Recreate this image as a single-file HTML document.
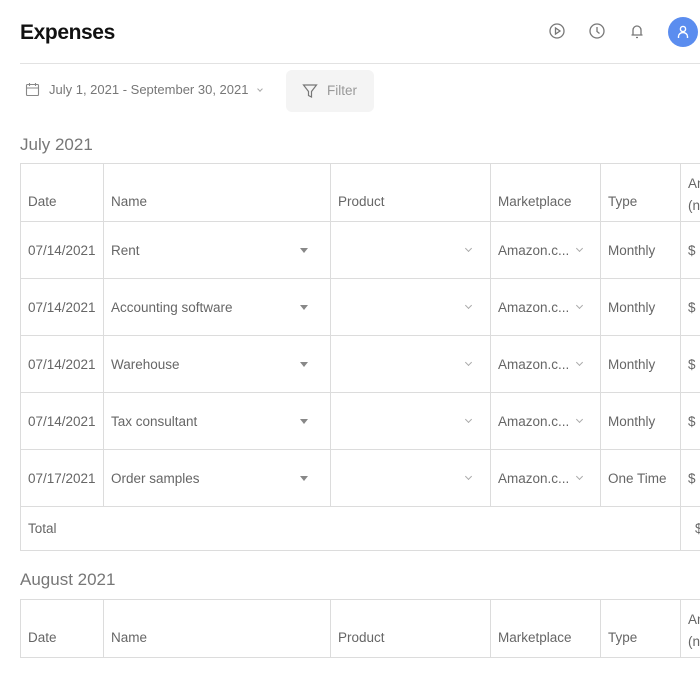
<!DOCTYPE html>
<html><head><style>
html,body{margin:0;padding:0;width:700px;height:700px;overflow:hidden;background:#fff;font-family:"Liberation Sans",sans-serif;color:#666;}
.abs{position:absolute}
h1{position:absolute;left:20px;top:21px;margin:0;font-size:21px;font-weight:bold;color:#111;letter-spacing:-0.4px}
.hr{position:absolute;left:20px;top:63px;width:680px;height:1px;background:#e2e2e2}
table{position:absolute;left:20px;border-collapse:collapse;table-layout:fixed;width:760px;font-size:13.5px;color:#666}
td{border:1px solid #dcdcdc;padding:0 0 0 7px;white-space:nowrap;overflow:hidden;position:relative}
.tri{position:absolute;top:50%;margin-top:-2px;width:0;height:0;border-left:4px solid transparent;border-right:4px solid transparent;border-top:5px solid #888}
.chev{position:absolute;top:50%;margin-top:-4px;width:4px;height:4px;border-right:1px solid #aaa;border-bottom:1px solid #aaa;transform:rotate(45deg)}
.sec{position:absolute;left:20px;font-size:17px;color:#777}
</style></head><body>
<h1>Expenses</h1>
<svg class="abs" style="left:548px;top:22px" width="18" height="18" viewBox="0 0 18 18" fill="none" stroke="#777" stroke-width="1.3"><circle cx="9" cy="9" r="7"/><path d="M7.5 6v6l4.5-3z"/></svg>
<svg class="abs" style="left:588px;top:22px" width="18" height="18" viewBox="0 0 18 18" fill="none" stroke="#777" stroke-width="1.3"><circle cx="9" cy="9" r="7"/><path d="M9 5v4.5l2.5 2"/></svg>
<svg class="abs" style="left:628px;top:22px" width="18" height="18" viewBox="0 0 18 18" fill="none" stroke="#777" stroke-width="1.3"><path d="M5 13V8a4 4 0 0 1 8 0v5M3.5 13h11M8 15.5h2"/></svg>
<div class="abs" style="left:668px;top:17px;width:30px;height:30px;border-radius:50%;background:#5b8def"></div>
<svg class="abs" style="left:675px;top:24px" width="16" height="16" viewBox="0 0 16 16" fill="none" stroke="#fff" stroke-width="1.4"><circle cx="8" cy="5" r="2.6"/><path d="M3.5 14v-1.5a4.5 4 0 0 1 9 0V14"/></svg>
<div class="hr"></div>
<svg class="abs" style="left:25px;top:82px" width="15" height="15" viewBox="0 0 15 15" fill="none" stroke="#888" stroke-width="1.1"><rect x="1.5" y="2.5" width="12" height="11" rx="1"/><path d="M1.5 6h12M4.5 1v3M10.5 1v3"/></svg>
<div class="abs" style="left:49px;top:82px;font-size:13px;color:#777">July 1, 2021 - September 30, 2021</div>
<div class="abs" style="left:258px;top:87px;width:3px;height:3px;border-right:1px solid #aaa;border-bottom:1px solid #aaa;transform:rotate(45deg)"></div>
<div class="abs" style="left:286px;top:70px;width:88px;height:42px;border-radius:6px;background:#f4f4f4"></div>
<svg class="abs" style="left:302px;top:83px" width="16" height="16" viewBox="0 0 16 16" fill="none" stroke="#777" stroke-width="1.2"><path d="M1.5 2h13L9.5 8.5V14l-3-1.5V8.5z"/></svg>
<div class="abs" style="left:327px;top:83px;font-size:13.5px;color:#999">Filter</div>

<div class="sec" style="top:135px">July 2021</div>
<table style="top:163px">
<colgroup><col style="width:83px"><col style="width:227px"><col style="width:160px"><col style="width:110px"><col style="width:80px"><col style="width:100px"></colgroup>
<tr style="height:58px"><td style="padding-top:18px">Date</td><td style="padding-top:18px">Name</td><td style="padding-top:18px">Product</td><td style="padding-top:18px">Marketplace</td><td style="padding-top:18px">Type</td><td style="line-height:22px;padding-top:4px">Am<br>(n</td></tr>
<tr style="height:57px"><td>07/14/2021</td><td>Rent<span class="tri" style="left:196px"></span></td><td><span class="chev" style="left:135px"></span></td><td>Amazon.c...<span class="chev" style="left:86px"></span></td><td>Monthly</td><td>$</td></tr>
<tr style="height:57px"><td>07/14/2021</td><td>Accounting software<span class="tri" style="left:196px"></span></td><td><span class="chev" style="left:135px"></span></td><td>Amazon.c...<span class="chev" style="left:86px"></span></td><td>Monthly</td><td>$</td></tr>
<tr style="height:57px"><td>07/14/2021</td><td>Warehouse<span class="tri" style="left:196px"></span></td><td><span class="chev" style="left:135px"></span></td><td>Amazon.c...<span class="chev" style="left:86px"></span></td><td>Monthly</td><td>$</td></tr>
<tr style="height:57px"><td>07/14/2021</td><td>Tax consultant<span class="tri" style="left:196px"></span></td><td><span class="chev" style="left:135px"></span></td><td>Amazon.c...<span class="chev" style="left:86px"></span></td><td>Monthly</td><td>$</td></tr>
<tr style="height:57px"><td>07/17/2021</td><td>Order samples<span class="tri" style="left:196px"></span></td><td><span class="chev" style="left:135px"></span></td><td>Amazon.c...<span class="chev" style="left:86px"></span></td><td>One Time</td><td>$</td></tr>
<tr style="height:44px"><td colspan="5">Total</td><td style="padding-left:14px">$</td></tr>
</table>

<div class="sec" style="top:570px">August 2021</div>
<table style="top:599px">
<colgroup><col style="width:83px"><col style="width:227px"><col style="width:160px"><col style="width:110px"><col style="width:80px"><col style="width:100px"></colgroup>
<tr style="height:58px"><td style="padding-top:18px">Date</td><td style="padding-top:18px">Name</td><td style="padding-top:18px">Product</td><td style="padding-top:18px">Marketplace</td><td style="padding-top:18px">Type</td><td style="line-height:22px;padding-top:4px">Am<br>(n</td></tr>
</table>
</body></html>
